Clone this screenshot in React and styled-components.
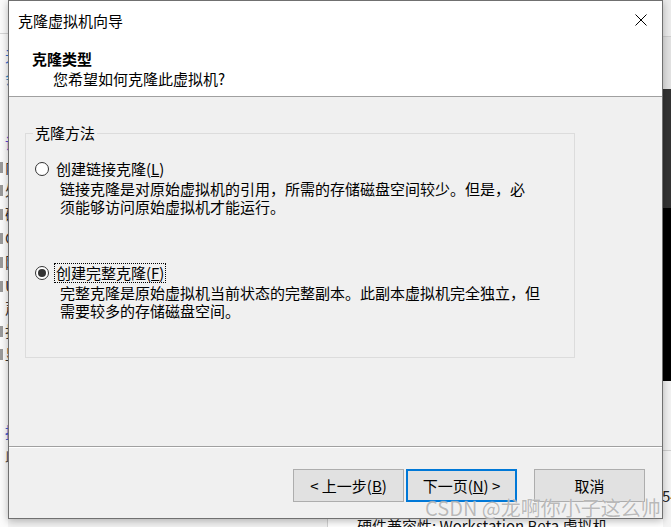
import React from 'react';
import styled, { createGlobalStyle } from 'styled-components';

const GlobalStyle = createGlobalStyle`
  html, body {
    margin: 0;
    padding: 0;
    background: #ffffff;
  }
  body {
    font-family: "Noto Sans CJK SC", "Noto Sans", sans-serif;
    color: #000;
  }
`;

const Desktop = styled.div`
  position: relative;
  width: 671px;
  height: 527px;
  overflow: hidden;
  display: grid;
  grid-template-columns: 8px 655px 8px;
  grid-template-rows: 519px 8px;
  background: #ffffff;
`;

/* ---------- background behind the dialog ---------- */

const LeftStrip = styled.div`
  grid-column: 1;
  grid-row: 1 / 3;
  overflow: hidden;
  background: #fbfbfb;
  display: flex;
  flex-direction: column;
  font-size: 15px;
  line-height: 18px;
`;

const StripLine = styled.div`
  height: 0;
  margin-top: ${(p) => p.$top}px;
  border-top: 1px solid #d6d6d6;
`;

const StripItem = styled.div`
  display: flex;
  align-items: center;
  height: 18px;
  margin-top: ${(p) => p.$gap}px;
  white-space: nowrap;
`;

const StripIcon = styled.span`
  flex: none;
  width: 3px;
  height: 11px;
  margin-right: 2px;
  background: ${(p) => (p.$show ? '#9a9a9a' : 'transparent')};
`;

const StripText = styled.span`
  color: ${(p) => p.$color};
`;

const RightStrip = styled.div`
  grid-column: 3;
  grid-row: 1 / 3;
  overflow: hidden;
  display: flex;
  flex-direction: column;
  font-size: 15px;
`;

const Band = styled.div`
  flex: none;
  height: ${(p) => p.$h}px;
  background: ${(p) => p.$bg};
  border-bottom: ${(p) => (p.$line ? '1px solid #cfcfcf' : 'none')};
`;

const BandRest = styled.div`
  flex: 1;
  background: #f4f4f4;
  padding-top: 36px;
  color: #222;
  line-height: 18px;
  margin-left: -1px;
`;

const BottomStrip = styled.div`
  grid-column: 2;
  grid-row: 2;
  display: flex;
  overflow: hidden;
  background: #ffffff;
`;

const BottomLeft = styled.div`
  width: 319px;
  background: #f2f2f2;
  border-right: 1px solid #d2d2d2;
`;

const BottomText = styled.div`
  padding-left: 29px;
  margin-top: -2px;
  font-size: 15px;
  line-height: 18px;
  white-space: nowrap;
  color: #111;
`;

/* ---------- dialog ---------- */

const Dialog = styled.div`
  grid-column: 2;
  grid-row: 1;
  position: relative;
  z-index: 1;
  box-sizing: border-box;
  display: flex;
  flex-direction: column;
  border: 1px solid #707070;
  background: #f0f0f0;
  box-shadow: 0 2px 8px rgba(0, 0, 0, 0.28);
  font-size: 15px;
`;

const TitleBar = styled.div`
  flex: none;
  height: 39px;
  display: flex;
  align-items: center;
  justify-content: space-between;
  padding: 0 15px 0 9px;
  background: #ffffff;
`;

const Title = styled.span`
  font-size: 15px;
  line-height: 20px;
`;

const CloseButton = styled.span`
  display: flex;
  width: 12px;
  height: 12px;
  margin-top: -2px;
`;

const Header = styled.div`
  flex: none;
  padding: 9px 0 7px 23px;
  background: #ffffff;
  border-bottom: 1px solid #a0a0a0;
`;

const HeaderTitle = styled.div`
  font-weight: 700;
  line-height: 20px;
`;

const HeaderSub = styled.div`
  padding-left: 21px;
  line-height: 20px;
`;

const Body = styled.div`
  flex: 1;
  padding: 27px 0 0 16px;
`;

const GroupBox = styled.fieldset`
  box-sizing: border-box;
  width: 550px;
  height: 234px;
  margin: 0;
  padding: 17px 10px 0 9px;
  border: 1px solid #dcdcdc;
  min-width: 0;
`;

const Legend = styled.legend`
  padding: 0 2px;
  margin-left: -2px;
  line-height: 18px;
  font-size: 15px;
`;

const Option = styled.div`
  margin-top: ${(p) => p.$gap || 0}px;
`;

const OptionRow = styled.div`
  display: flex;
  align-items: center;
  height: 20px;
`;

const Radio = styled.span`
  flex: none;
  box-sizing: border-box;
  width: 14px;
  height: 14px;
  margin-right: 5px;
  border-radius: 50%;
  border: 1px solid #333333;
  background: #ffffff;
  display: flex;
  align-items: center;
  justify-content: center;

  &::after {
    content: '';
    width: 8px;
    height: 8px;
    border-radius: 50%;
    background: ${(p) => (p.$checked ? '#333333' : 'transparent')};
  }
`;

const OptionLabel = styled.span`
  padding: 0 1px;
  line-height: 18px;
  border: 1px dotted ${(p) => (p.$focused ? '#000000' : 'transparent')};
`;

const OptionDesc = styled.div`
  margin-top: 1px;
  padding-left: 25px;
  line-height: 18px;
  white-space: nowrap;
`;

const Footer = styled.div`
  flex: none;
  box-sizing: border-box;
  height: 72px;
  border-top: 1px solid #a0a0a0;
  box-shadow: inset 0 1px 0 #ffffff;
  display: flex;
  justify-content: flex-end;
  align-items: flex-start;
  padding: 22px 17px 0 0;
`;

const Button = styled.button`
  box-sizing: border-box;
  width: 111px;
  height: 33px;
  margin-left: ${(p) => p.$gap}px;
  padding: 0;
  font-family: "Noto Sans CJK SC", "Noto Sans", sans-serif;
  font-size: 15px;
  color: #000000;
  background: #e1e1e1;
  border: ${(p) => (p.$primary ? '2px solid #0078d7' : '1px solid #adadad')};
  border-radius: 0;
  display: flex;
  align-items: center;
  justify-content: center;
`;

const Watermark = styled.div`
  position: absolute;
  z-index: 2;
  left: 425px;
  top: 496px;
  font-family: "Noto Sans CJK SC", "Noto Sans", sans-serif;
  font-size: 20px;
  line-height: 24px;
  white-space: nowrap;
  color: rgba(140, 140, 140, 0.6);
  text-shadow: 0 0 1px rgba(255, 255, 255, 0.9);
`;

const leftItems = [
  { gap: 13, text: '无', color: '#2f6fd6' },
  { gap: 4, text: '会', color: '#2a8fd0' },
  { gap: 47, text: '设', color: '#5a4bd8' },
  { gap: 6, text: '内', color: '#333', icon: true },
  { gap: 5, text: '处', color: '#333', icon: true },
  { gap: 6, text: '硬', color: '#333', icon: true },
  { gap: 6, text: 'C', color: '#333', icon: true },
  { gap: 6, text: '网', color: '#333', icon: true },
  { gap: 6, text: 'U', color: '#333', icon: true },
  { gap: 4, text: '声', color: '#333' },
  { gap: 5, text: '打', color: '#333', icon: true },
  { gap: 5, text: '显', color: '#333', icon: true },
  { gap: 60, text: '描', color: '#3f5fd0' },
  { gap: 5, text: '此', color: '#555' },
];

function CloseIcon() {
  return (
    <svg width="12" height="12" viewBox="0 0 12 12">
      <path d="M0.5 0.5 L11.5 11.5 M11.5 0.5 L0.5 11.5" stroke="#000" strokeWidth="1" fill="none" />
    </svg>
  );
}

export default function App() {
  return (
    <>
      <GlobalStyle />
      <Desktop>
        <LeftStrip>
          <StripLine $top={33} />
          {leftItems.map((item, i) => (
            <StripItem key={i} $gap={item.gap}>
              <StripIcon $show={item.icon} />
              <StripText $color={item.color}>{item.text}</StripText>
            </StripItem>
          ))}
        </LeftStrip>

        <Dialog>
          <TitleBar>
            <Title>克隆虚拟机向导</Title>
            <CloseButton>
              <CloseIcon />
            </CloseButton>
          </TitleBar>
          <Header>
            <HeaderTitle>克隆类型</HeaderTitle>
            <HeaderSub>您希望如何克隆此虚拟机?</HeaderSub>
          </Header>

          <Body>
            <GroupBox>
              <Legend>克隆方法</Legend>
              <Option>
                <OptionRow>
                  <Radio />
                  <OptionLabel>
                    创建链接克隆(<u>L</u>)
                  </OptionLabel>
                </OptionRow>
                <OptionDesc>
                  链接克隆是对原始虚拟机的引用，所需的存储磁盘空间较少。但是，必
                  <br />
                  须能够访问原始虚拟机才能运行。
                </OptionDesc>
              </Option>
              <Option $gap={47}>
                <OptionRow>
                  <Radio $checked />
                  <OptionLabel $focused>
                    创建完整克隆(<u>F</u>)
                  </OptionLabel>
                </OptionRow>
                <OptionDesc>
                  完整克隆是原始虚拟机当前状态的完整副本。此副本虚拟机完全独立，但
                  <br />
                  需要较多的存储磁盘空间。
                </OptionDesc>
              </Option>
            </GroupBox>
          </Body>

          <Footer>
            <Button $gap={0}>
              &lt; 上一步(<u>B</u>)
            </Button>
            <Button $gap={2} $primary>
              下一页(<u>N</u>) &gt;
            </Button>
            <Button $gap={17}>取消</Button>
          </Footer>
        </Dialog>

        <RightStrip>
          <Band $h={36} $bg="#ececec" $line />
          <Band $h={52} $bg="#e2e2e2" />
          <Band $h={119} $bg="#333333" />
          <Band $h={173} $bg="#000000" />
          <Band $h={69} $bg="#f2f2f2" $line />
          <BandRest>54</BandRest>
        </RightStrip>

        <BottomStrip>
          <BottomLeft />
          <BottomText>硬件兼容性: Workstation Beta 虚拟机</BottomText>
        </BottomStrip>

        <Watermark>CSDN @龙啊你小子这么帅</Watermark>
      </Desktop>
    </>
  );
}
